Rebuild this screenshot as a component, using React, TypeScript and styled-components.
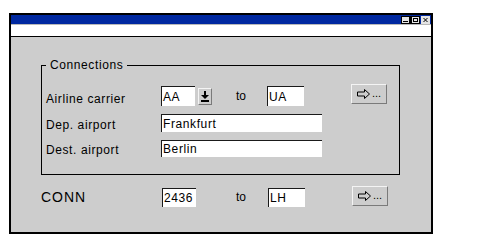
import styled, { createGlobalStyle } from "styled-components";

const GlobalStyle = createGlobalStyle`
  body {
    margin: 0;
    background: #fff;
    font-family: "Liberation Sans", Arial, sans-serif;
    color: #000;
  }
`;

const Page = styled.div`
  padding: 13px 0 0 9px;
`;

const Window = styled.div`
  width: 424px;
  height: 221px;
  box-sizing: border-box;
  border: 2px solid #000;
  background: #cdcdcd;
  display: flex;
  flex-direction: column;
`;

const TitleBar = styled.div`
  height: 9px;
  background: #0028a0;
  display: flex;
  justify-content: flex-end;
  align-items: flex-start;
  padding: 1px 1px 0 0;
  box-sizing: border-box;
`;

const TitleGroup = styled.div`
  display: flex;
  margin-right: 1px;
`;

const TitleButton = styled.div`
  width: 9px;
  height: 8px;
  background: #e4e4e4;
  border-right: 1px solid #000;
  display: flex;
  &:last-child {
    border-right: none;
  }
`;

const Rule = styled.div`
  height: 1px;
  background: #b8b8b8;
`;

const MenuBar = styled.div`
  height: 11px;
  background: #fff;
  border-bottom: 1px solid #000;
`;

const Body = styled.div`
  flex: 1;
  padding: 21px 0 0 30px;
`;

const Group = styled.fieldset`
  width: 359px;
  margin: 0;
  padding: 12px 0 17px 0;
  box-sizing: border-box;
  border: 1px solid #000;
  display: flex;
  flex-direction: column;
  gap: 6px;
`;

const Legend = styled.legend`
  margin-left: 4px;
  padding: 0 4px;
  font-size: 12px;
  line-height: 14px;
  letter-spacing: 0.6px;
`;

const Row = styled.div<{ $top?: number }>`
  display: flex;
  align-items: center;
  margin-top: ${(p) => p.$top ?? 0}px;
`;

const Label = styled.span<{ $w: number; $size?: number; $drop?: number }>`
  width: ${(p) => p.$w}px;
  flex-shrink: 0;
  font-size: ${(p) => p.$size ?? 12}px;
  letter-spacing: ${(p) => (p.$size ? 1 : 0.6)}px;
  padding-top: ${(p) => p.$drop ?? 0}px;
  box-sizing: border-box;
`;

const Field = styled.div<{ $w: number; $h?: number; $ml?: number }>`
  width: ${(p) => p.$w}px;
  height: ${(p) => p.$h ?? 20}px;
  margin-left: ${(p) => p.$ml ?? 0}px;
  box-sizing: border-box;
  background: #fff;
  border-top: 1px solid #1a1a1a;
  border-left: 1px solid #1a1a1a;
  font-size: 12px;
  letter-spacing: 0.6px;
  padding-left: 1px;
  display: flex;
  align-items: center;
  flex-shrink: 0;
`;

const To = styled.span<{ $ml: number; $mr: number }>`
  margin-left: ${(p) => p.$ml}px;
  margin-right: ${(p) => p.$mr}px;
  font-size: 12px;
  width: 10px;
`;

const Raised = styled.div<{ $w: number; $h: number; $ml: number; $up?: number }>`
  width: ${(p) => p.$w}px;
  height: ${(p) => p.$h}px;
  margin-left: ${(p) => p.$ml}px;
  margin-bottom: ${(p) => p.$up ?? 0}px;
  box-sizing: border-box;
  background: #cdcdcd;
  border-top: 1px solid #f4f4f4;
  border-left: 1px solid #f4f4f4;
  border-right: 1px solid #7a7a7a;
  border-bottom: 1px solid #7a7a7a;
  display: flex;
  align-items: center;
  justify-content: center;
  flex-shrink: 0;
`;

const Dots = styled.span`
  font-size: 11px;
  line-height: 1;
  margin-left: 1px;
  align-self: flex-end;
  margin-bottom: 4px;
`;

function ArrowIcon() {
  return (
    <svg width="14" height="10" viewBox="0 0 14 10">
      <path
        d="M0.5 3 H7.5 V0.5 L12.5 5 L7.5 9.5 V7 H0.5 Z"
        fill="none"
        stroke="#000"
        strokeWidth="1"
      />
    </svg>
  );
}

function MoreButton({ ml, up }: { ml: number; up?: number }) {
  return (
    <Raised $w={36} $h={20} $ml={ml} $up={up}>
      <ArrowIcon />
      <Dots>...</Dots>
    </Raised>
  );
}

function DropIcon() {
  return (
    <svg width="8" height="11" viewBox="0 0 8 11">
      <rect x="3" y="0" width="2" height="5" fill="#000" />
      <path d="M0 4 H8 L4 8 Z" fill="#000" />
      <rect x="0" y="9" width="8" height="2" fill="#000" />
    </svg>
  );
}

export default function App() {
  return (
    <>
      <GlobalStyle />
      <Page>
        <Window>
          <TitleBar>
            <TitleGroup>
              <TitleButton>
                <svg width="9" height="8" viewBox="0 0 9 8">
                  <rect x="0.5" y="0.5" width="8" height="7" fill="none" stroke="#000" />
                  <rect x="2" y="5" width="5" height="1" fill="#000" />
                </svg>
              </TitleButton>
              <TitleButton>
                <svg width="9" height="8" viewBox="0 0 9 8">
                  <rect x="0.5" y="0.5" width="8" height="7" fill="none" stroke="#000" />
                  <rect x="2.5" y="2.5" width="4" height="3" fill="none" stroke="#000" />
                </svg>
              </TitleButton>
            </TitleGroup>
            <TitleButton>
              <svg width="9" height="8" viewBox="0 0 9 8">
                <path d="M2.5 2 L6.5 6 M6.5 2 L2.5 6" stroke="#000" strokeWidth="1" />
              </svg>
            </TitleButton>
          </TitleBar>
          <Rule />
          <MenuBar />
          <Body>
            <Group>
              <Legend>Connections</Legend>
              <Row>
                <Label $w={119} $drop={6}>
                  &nbsp;Airline carrier
                </Label>
                <Field $w={34}>AA</Field>
                <Raised $w={14} $h={17} $ml={3}>
                  <DropIcon />
                </Raised>
                <To $ml={24} $mr={21}>to</To>
                <Field $w={37}>UA</Field>
                <MoreButton ml={47} up={4} />
              </Row>
              <Row>
                <Label $w={119} $drop={3}>
                  &nbsp;Dep. airport
                </Label>
                <Field $w={161} $h={18}>
                  Frankfurt
                </Field>
              </Row>
              <Row $top={2}>
                <Label $w={119} $drop={2}>
                  &nbsp;Dest. airport
                </Label>
                <Field $w={161} $h={17}>
                  Berlin
                </Field>
              </Row>
            </Group>
            <Row $top={11}>
              <Label $w={121} $size={14}>
                CONN
              </Label>
              <Field $w={34} $h={19}>
                2436
              </Field>
              <To $ml={40} $mr={22}>to</To>
              <Field $w={37} $h={19}>
                LH
              </Field>
              <MoreButton ml={47} up={2} />
            </Row>
          </Body>
        </Window>
      </Page>
    </>
  );
}
